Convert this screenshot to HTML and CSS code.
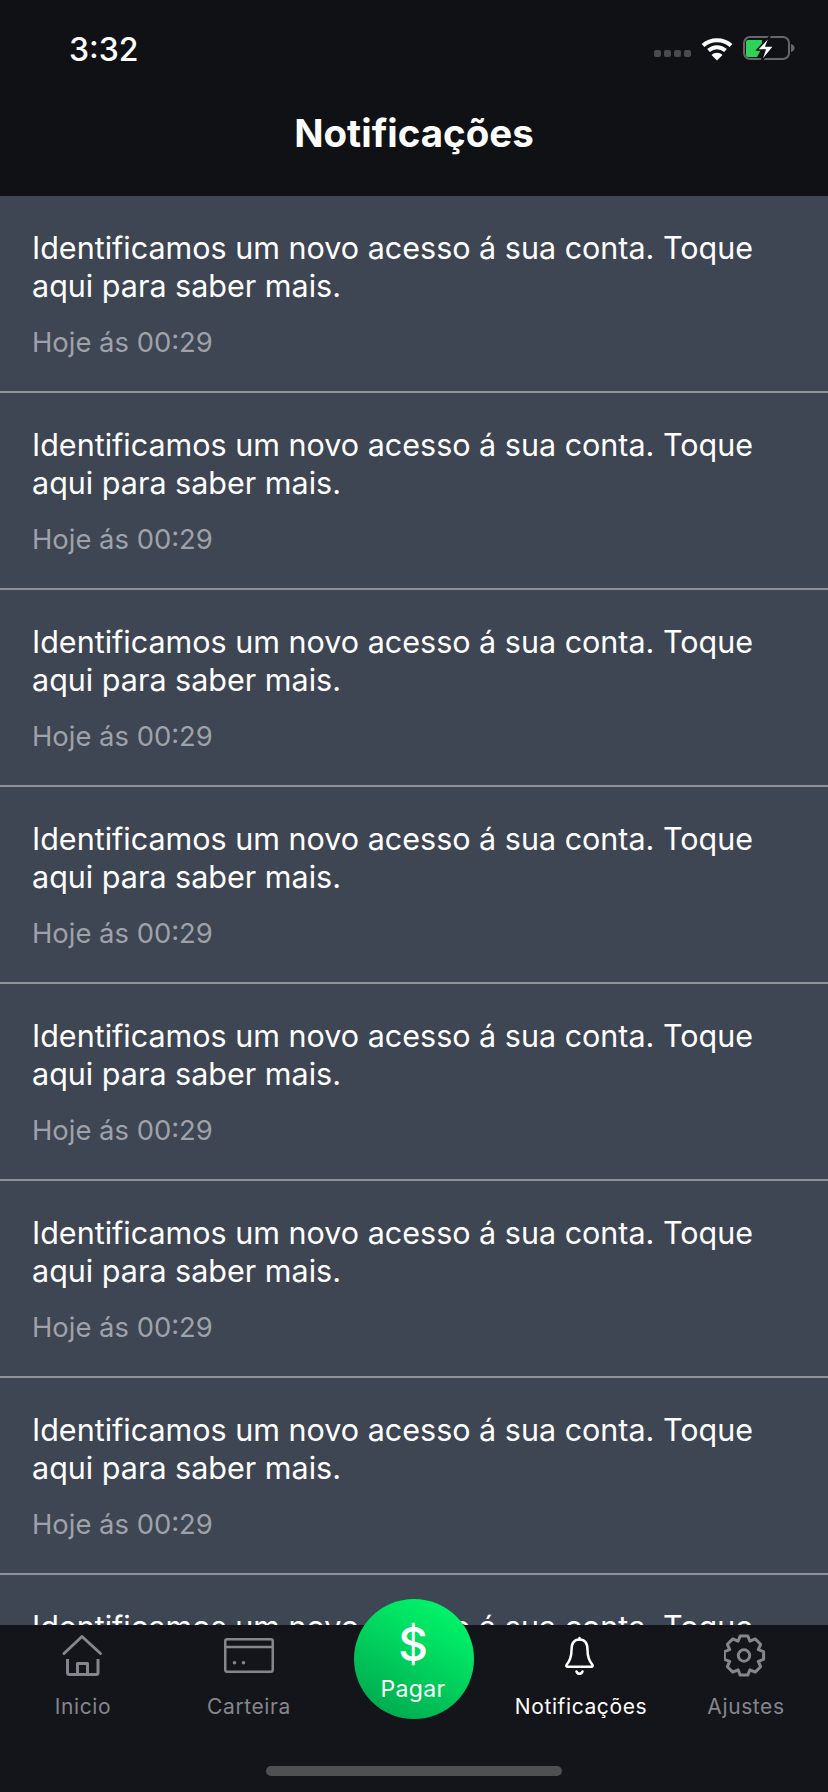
FILE: index.html
```html
<!DOCTYPE html>
<html lang="pt-BR">
<head>
    <meta charset="UTF-8">
    <meta name="viewport" content="width=device-width, initial-scale=1.0">
    <title>Notificações</title>
    <link rel="stylesheet" href="styles.css">
</head>
<body>
    <div class="app">
        <!-- Status bar and title -->
        <header class="top-bar">
            <div class="status-bar">
                <span class="clock">3:32</span>
                <div class="status-icons">
                    <div class="signal-dots"><i></i><i></i><i></i><i></i></div>
                    <svg class="wifi-icon" width="32" height="24" viewBox="0 0 32 24">
                        <path d="M2 8.5C9.5 1.5 22.5 1.5 30 8.5" fill="none" stroke="#fff" stroke-width="4"/>
                        <path d="M7.5 13.5C12.5 9 19.5 9 24.5 13.5" fill="none" stroke="#fff" stroke-width="4"/>
                        <path d="M10.5 18L16 23.5L21.5 18C18.500 15 13.500 15 10.500 18Z" fill="#fff"/>
                    </svg>
                    <svg class="battery-icon" width="52" height="26" viewBox="0 0 52 26">
                        <rect x="1" y="1" width="45" height="22" rx="6" fill="none" stroke="#66676a" stroke-width="2"/>
                        <path d="M3 6a2 2 0 0 1 2-2H19V12L14 21H5a2 2 0 0 1-2-2Z" fill="#30d158"/>
                        <path d="M48 8c2 .5 3.500 2 3.500 4s-1.500 3.500-3.500 4Z" fill="#66676a"/>
                        <path d="M27 0L14 14H22L18 26L31 10H23Z" fill="#fff" stroke="#101114" stroke-width="1.500"/>
                    </svg>
                </div>
            </div>
            <h1 class="page-title">Notificações</h1>
        </header>

        <!-- Notification list -->
        <main class="notification-list">
            <div class="notification">
                <p class="notification-text">Identificamos um novo acesso á sua conta. Toque aqui para saber mais.</p>
                <p class="notification-time">Hoje ás 00:29</p>
            </div>
            <div class="notification">
                <p class="notification-text">Identificamos um novo acesso á sua conta. Toque aqui para saber mais.</p>
                <p class="notification-time">Hoje ás 00:29</p>
            </div>
            <div class="notification">
                <p class="notification-text">Identificamos um novo acesso á sua conta. Toque aqui para saber mais.</p>
                <p class="notification-time">Hoje ás 00:29</p>
            </div>
            <div class="notification">
                <p class="notification-text">Identificamos um novo acesso á sua conta. Toque aqui para saber mais.</p>
                <p class="notification-time">Hoje ás 00:29</p>
            </div>
            <div class="notification">
                <p class="notification-text">Identificamos um novo acesso á sua conta. Toque aqui para saber mais.</p>
                <p class="notification-time">Hoje ás 00:29</p>
            </div>
            <div class="notification">
                <p class="notification-text">Identificamos um novo acesso á sua conta. Toque aqui para saber mais.</p>
                <p class="notification-time">Hoje ás 00:29</p>
            </div>
            <div class="notification">
                <p class="notification-text">Identificamos um novo acesso á sua conta. Toque aqui para saber mais.</p>
                <p class="notification-time">Hoje ás 00:29</p>
            </div>
            <div class="notification">
                <p class="notification-text">Identificamos um novo acesso á sua conta. Toque aqui para saber mais.</p>
                <p class="notification-time">Hoje ás 00:29</p>
            </div>
        </main>

        <!-- Bottom tabs -->
        <nav class="tab-bar">
            <div class="tabs">
                <a class="tab" href="#">
                    <svg class="tab-icon" width="44" height="44" viewBox="0 0 44 44" fill="none" stroke="currentColor" stroke-width="3" stroke-linecap="round" stroke-linejoin="round">
                        <path d="M3 20.500L21 3.500L39.500 20.500"/>
                        <path d="M6.500 26V39.500Q6.500 41.500 8.500 41.500H35Q37 41.500 37 39.500V26" stroke-linecap="butt"/>
                        <path d="M16.500 41V30.500H26.500V41" stroke-linecap="butt"/>
                    </svg>
                    <span class="tab-label">Inicio</span>
                </a>
                <a class="tab" href="#">
                    <svg class="tab-icon" width="50" height="44" viewBox="0 0 50 44" fill="none" stroke="currentColor" stroke-width="2.500" stroke-linejoin="round">
                        <rect x="1.250" y="6.250" width="47.500" height="32.500" rx="2"/>
                        <path d="M1.250 14H48.750"/>
                        <circle cx="10.500" cy="29.700" r="1.800" fill="currentColor" stroke="none"/>
                        <circle cx="19.500" cy="29.700" r="1.800" fill="currentColor" stroke="none"/>
                    </svg>
                    <span class="tab-label">Carteira</span>
                </a>
                <a class="tab" href="#">
                    <span class="pay-button">
                        <span class="pay-symbol">$</span>
                        <span class="pay-label">Pagar</span>
                    </span>
                </a>
                <a class="tab tab-active" href="#">
                    <svg class="tab-icon" width="44" height="44" viewBox="0 0 44 44" fill="none" stroke="currentColor" stroke-width="2.500" stroke-linecap="round" stroke-linejoin="round">
                        <path d="M20.500 6.500C14 6.500 12.500 11 12.500 17C12.500 25 10 29 7.500 32C7 33 7.500 33.700 8.500 33.700H32.500C33.500 33.700 34 33 33.500 32C31 29 28.500 25 28.500 17C28.500 11 27 6.500 20.500 6.500Z"/>
                        <path d="M20.500 5V6.500"/>
                        <path d="M17.500 38.500C18.500 41.500 22.500 41.500 23.500 38.500"/>
                    </svg>
                    <span class="tab-label">Notificações</span>
                </a>
                <a class="tab" href="#">
                    <svg class="tab-icon" width="44" height="44" viewBox="0 0 44 44" fill="none" stroke="currentColor" stroke-width="3" stroke-linejoin="round">
                        <g transform="translate(-2 .5)">
                            <circle cx="22" cy="22" r="5.700"/>
                            <path d="M25.800 2.400L27.900 7.700L33.200 5.400L38.600 10.800L36.300 16.100L41.600 18.200V25.800L36.300 27.900L38.600 33.200L33.200 38.600L27.900 36.300L25.800 41.600H18.200L16.100 36.300L10.800 38.600L5.400 33.200L7.700 27.900L2.400 25.800V18.200L7.700 16.100L5.400 10.800L10.800 5.400L16.100 7.700L18.200 2.400Z"/>
                        </g>
                    </svg>
                    <span class="tab-label">Ajustes</span>
                </a>
            </div>
            <div class="home-indicator"></div>
        </nav>
    </div>
</body>
</html>
```

FILE: styles.css
```css
/* Base */
html, body {
    margin: 0;
    padding: 0;
    height: 100%;
}

body {
    font-family: Inter, "Noto Sans", sans-serif;
    background-color: #3e4553;
    color: #fff;
}

.app {
    display: flex;
    flex-direction: column;
    height: 1792px;
    overflow: hidden;
}

/* Header */
.top-bar {
    background-color: #101114;
    height: 196px;
    flex-shrink: 0;
}

.status-bar {
    display: flex;
    justify-content: space-between;
    align-items: center;
    height: 50px;
    padding: 24px 33px 0 69px;
}

.clock {
    font-size: 32px;
    font-weight: 500;
}

.status-icons {
    display: flex;
    align-items: center;
    gap: 10px;
}

.signal-dots {
    display: flex;
    gap: 3px;
    margin-top: 8px;
}

.signal-dots i {
    width: 7px;
    height: 7px;
    border-radius: 2px;
    background-color: #4a4b4d;
}

.page-title {
    margin: 37px 0 0;
    text-align: center;
    font-size: 38.5px;
    line-height: 44px;
    font-weight: 700;
}

/* Notifications */
.notification-list {
    flex: 1;
    min-height: 0;
    overflow: hidden;
}

.notification {
    height: 162px;
    padding: 33px 32px 0;
    border-bottom: 2px solid #8e9198;
}

.notification-text {
    margin: 0;
    font-size: 30.5px;
    line-height: 38px;
    width: 740px;
}

.notification-time {
    margin: 20px 0 0;
    font-size: 27.4px;
    line-height: 34px;
    color: #9fa2a9;
}

/* Bottom tabs */
.tab-bar {
    background-color: #14151a;
    height: 167px;
    flex-shrink: 0;
    position: relative;
}

.tabs {
    display: grid;
    grid-template-columns: 166px 166px 166px 166px 164px;
}

.tab {
    display: flex;
    flex-direction: column;
    align-items: center;
    padding-top: 8px;
    color: #85868d;
    text-decoration: none;
}

.tab-label {
    font-size: 21px;
    line-height: 26px;
    letter-spacing: 0.6px;
}

.tab-icon {
    height: 44px;
    margin-bottom: 17px;
}

.tab-active {
    color: #fff;
}

/* Round pay button sits over the top edge of the bar */
.pay-button {
    position: absolute;
    top: -26px;
    left: 354px;
    width: 120px;
    height: 120px;
    border-radius: 50%;
    background: linear-gradient(210deg, #00fb6c 0%, #00e564 30%, #00a04c 100%);
    color: #fff;
    display: flex;
    flex-direction: column;
    align-items: center;
}

.pay-symbol {
    font-size: 46px;
    font-weight: 500;
    margin: 21px 2px 0 0;
    height: 48px;
    line-height: 48px;
}

.pay-label {
    font-size: 23px;
    line-height: 26px;
    letter-spacing: 0.3px;
    margin: 8px 2px 0 0;
}

.home-indicator {
    position: absolute;
    left: 266px;
    top: 141px;
    width: 296px;
    height: 10px;
    border-radius: 5px;
    background-color: #505050;
}
```
